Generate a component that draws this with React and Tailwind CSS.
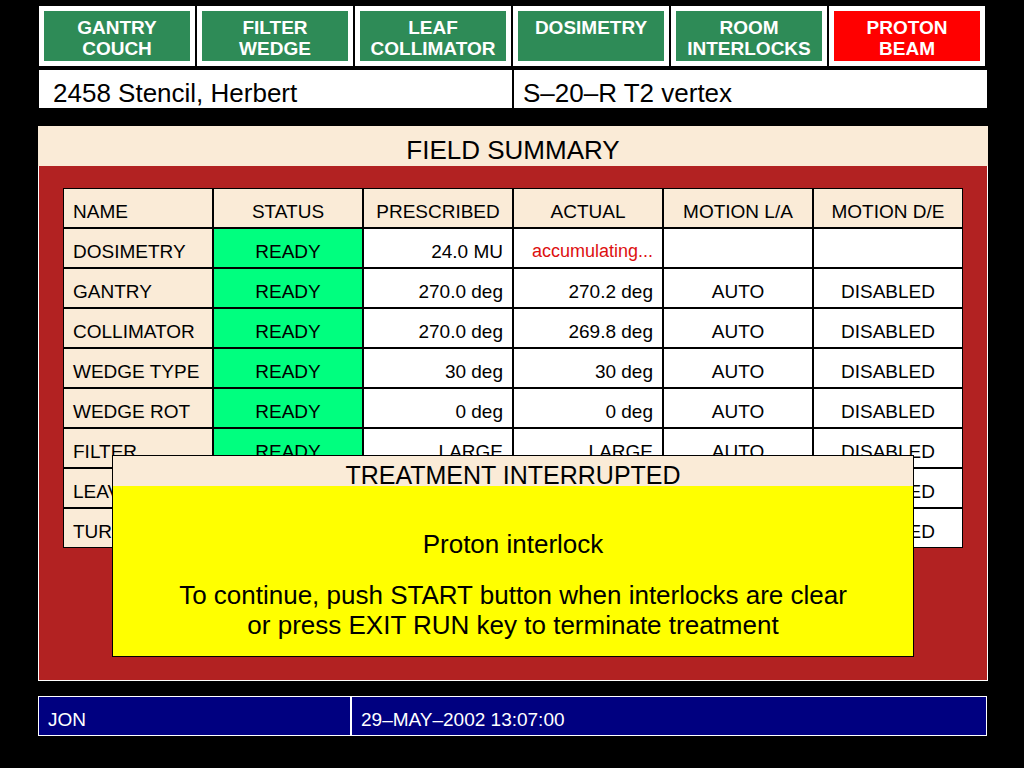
const SUBSYSTEMS = [
  { lines: ["GANTRY", "COUCH"] },
  { lines: ["FILTER", "WEDGE"] },
  { lines: ["LEAF", "COLLIMATOR"] },
  { lines: ["DOSIMETRY"] },
  { lines: ["ROOM", "INTERLOCKS"] },
  { lines: ["PROTON", "BEAM"], fault: true },
];

const COLUMNS = ["NAME", "STATUS", "PRESCRIBED", "ACTUAL", "MOTION L/A", "MOTION D/E"];

const ROWS = [
  ["DOSIMETRY", "READY", "24.0 MU", "accumulating...", "", ""],
  ["GANTRY", "READY", "270.0 deg", "270.2 deg", "AUTO", "DISABLED"],
  ["COLLIMATOR", "READY", "270.0 deg", "269.8 deg", "AUTO", "DISABLED"],
  ["WEDGE TYPE", "READY", "30 deg", "30 deg", "AUTO", "DISABLED"],
  ["WEDGE ROT", "READY", "0 deg", "0 deg", "AUTO", "DISABLED"],
  ["FILTER", "READY", "LARGE", "LARGE", "AUTO", "DISABLED"],
  ["LEAVES", "READY", "", "", "AUTO", "DISABLED"],
  ["TURNTABLE", "READY", "0 deg", "0 deg", "AUTO", "DISABLED"],
];

const CELL = "border border-black px-[9px] pt-3 pb-[5px] font-normal";

function SubsystemButton({ lines, fault }) {
  return (
    <button
      type="button"
      className={`flex min-h-[60px] flex-col items-center border-[5px] border-white pt-1.5 pb-0.5 font-bold text-white ${
        fault ? "bg-[#ff0000]" : "bg-[#2e8b57]"
      }`}
    >
      {lines.map((line) => (
        <span key={line}>{line}</span>
      ))}
    </button>
  );
}

function FieldTable() {
  return (
    <table className="w-full table-fixed border-separate border-spacing-0">
      <thead>
        <tr className="bg-[#faebd7]">
          {COLUMNS.map((name, i) => (
            <th key={name} scope="col" className={`${CELL} ${i === 0 ? "text-left" : "text-center"}`}>
              {name}
            </th>
          ))}
        </tr>
      </thead>
      <tbody>
        {ROWS.map(([name, status, prescribed, actual, la, de]) => (
          <tr key={name} className="h-10 bg-white">
            <th scope="row" className={`${CELL} bg-[#faebd7] text-left`}>{name}</th>
            <td className={`${CELL} bg-[#00ff7f] text-center`}>{status}</td>
            <td className={`${CELL} text-right`}>{prescribed}</td>
            <td className={`${CELL} text-right ${actual.endsWith("...") ? "text-[18px] text-[#dd1010]" : ""}`}>
              {actual}
            </td>
            <td className={`${CELL} text-center`}>{la}</td>
            <td className={`${CELL} text-center`}>{de}</td>
          </tr>
        ))}
      </tbody>
    </table>
  );
}

function InterruptDialog() {
  return (
    <div
      role="alertdialog"
      aria-labelledby="interrupt-title"
      className="absolute inset-x-[73px] top-[289px] border border-black bg-[#ffff00] text-center"
    >
      <h2 id="interrupt-title" className="bg-[#faebd7] pt-2 text-[25px] leading-[22px]">
        TREATMENT INTERRUPTED
      </h2>
      <div className="flex flex-col gap-[21px] pt-[43px] pb-4 text-[26px] leading-[30px]">
        <p>Proton interlock</p>
        <p>
          To continue, push START button when interlocks are clear
          <br />
          or press EXIT RUN key to terminate treatment
        </p>
      </div>
    </div>
  );
}

export default function App() {
  return (
    <div className="min-h-screen bg-black pt-1.5 pr-9 pb-8 pl-[38px] font-['Liberation_Sans',Arial,sans-serif] text-[19px] leading-[21px] text-black">
      <nav className="grid grid-cols-6 gap-0.5 pr-[3px] pl-px">
        {SUBSYSTEMS.map((s) => (
          <SubsystemButton key={s.lines.join(" ")} {...s} />
        ))}
      </nav>

      <header className="mx-px mt-1 grid grid-cols-2 gap-0.5 text-[26px] leading-[30px]">
        <div className="bg-white pt-2 pl-3.5">2458 Stencil, Herbert</div>
        <div className="bg-white pt-2 pl-[9px]">S–20–R T2 vertex</div>
      </header>

      <main className="mt-[18px]">
        <h1 className="bg-[#faebd7] pt-[9px] pb-px text-center text-[26px] leading-[30px]">FIELD SUMMARY</h1>
        <div className="relative border-x border-b border-white bg-[#b22222] px-6 pt-[22px] pb-[132px]">
          <FieldTable />
          <InterruptDialog />
        </div>
      </main>

      <footer className="mt-[15px] mr-px flex border border-white bg-[#000080] text-white">
        <div className="w-[313px] border-r-2 border-white pt-3 pb-[5px] pl-[9px]">JON</div>
        <div className="flex-1 pt-3 pb-[5px] pl-[9px]">29–MAY–2002 13:07:00</div>
      </footer>
    </div>
  );
}
